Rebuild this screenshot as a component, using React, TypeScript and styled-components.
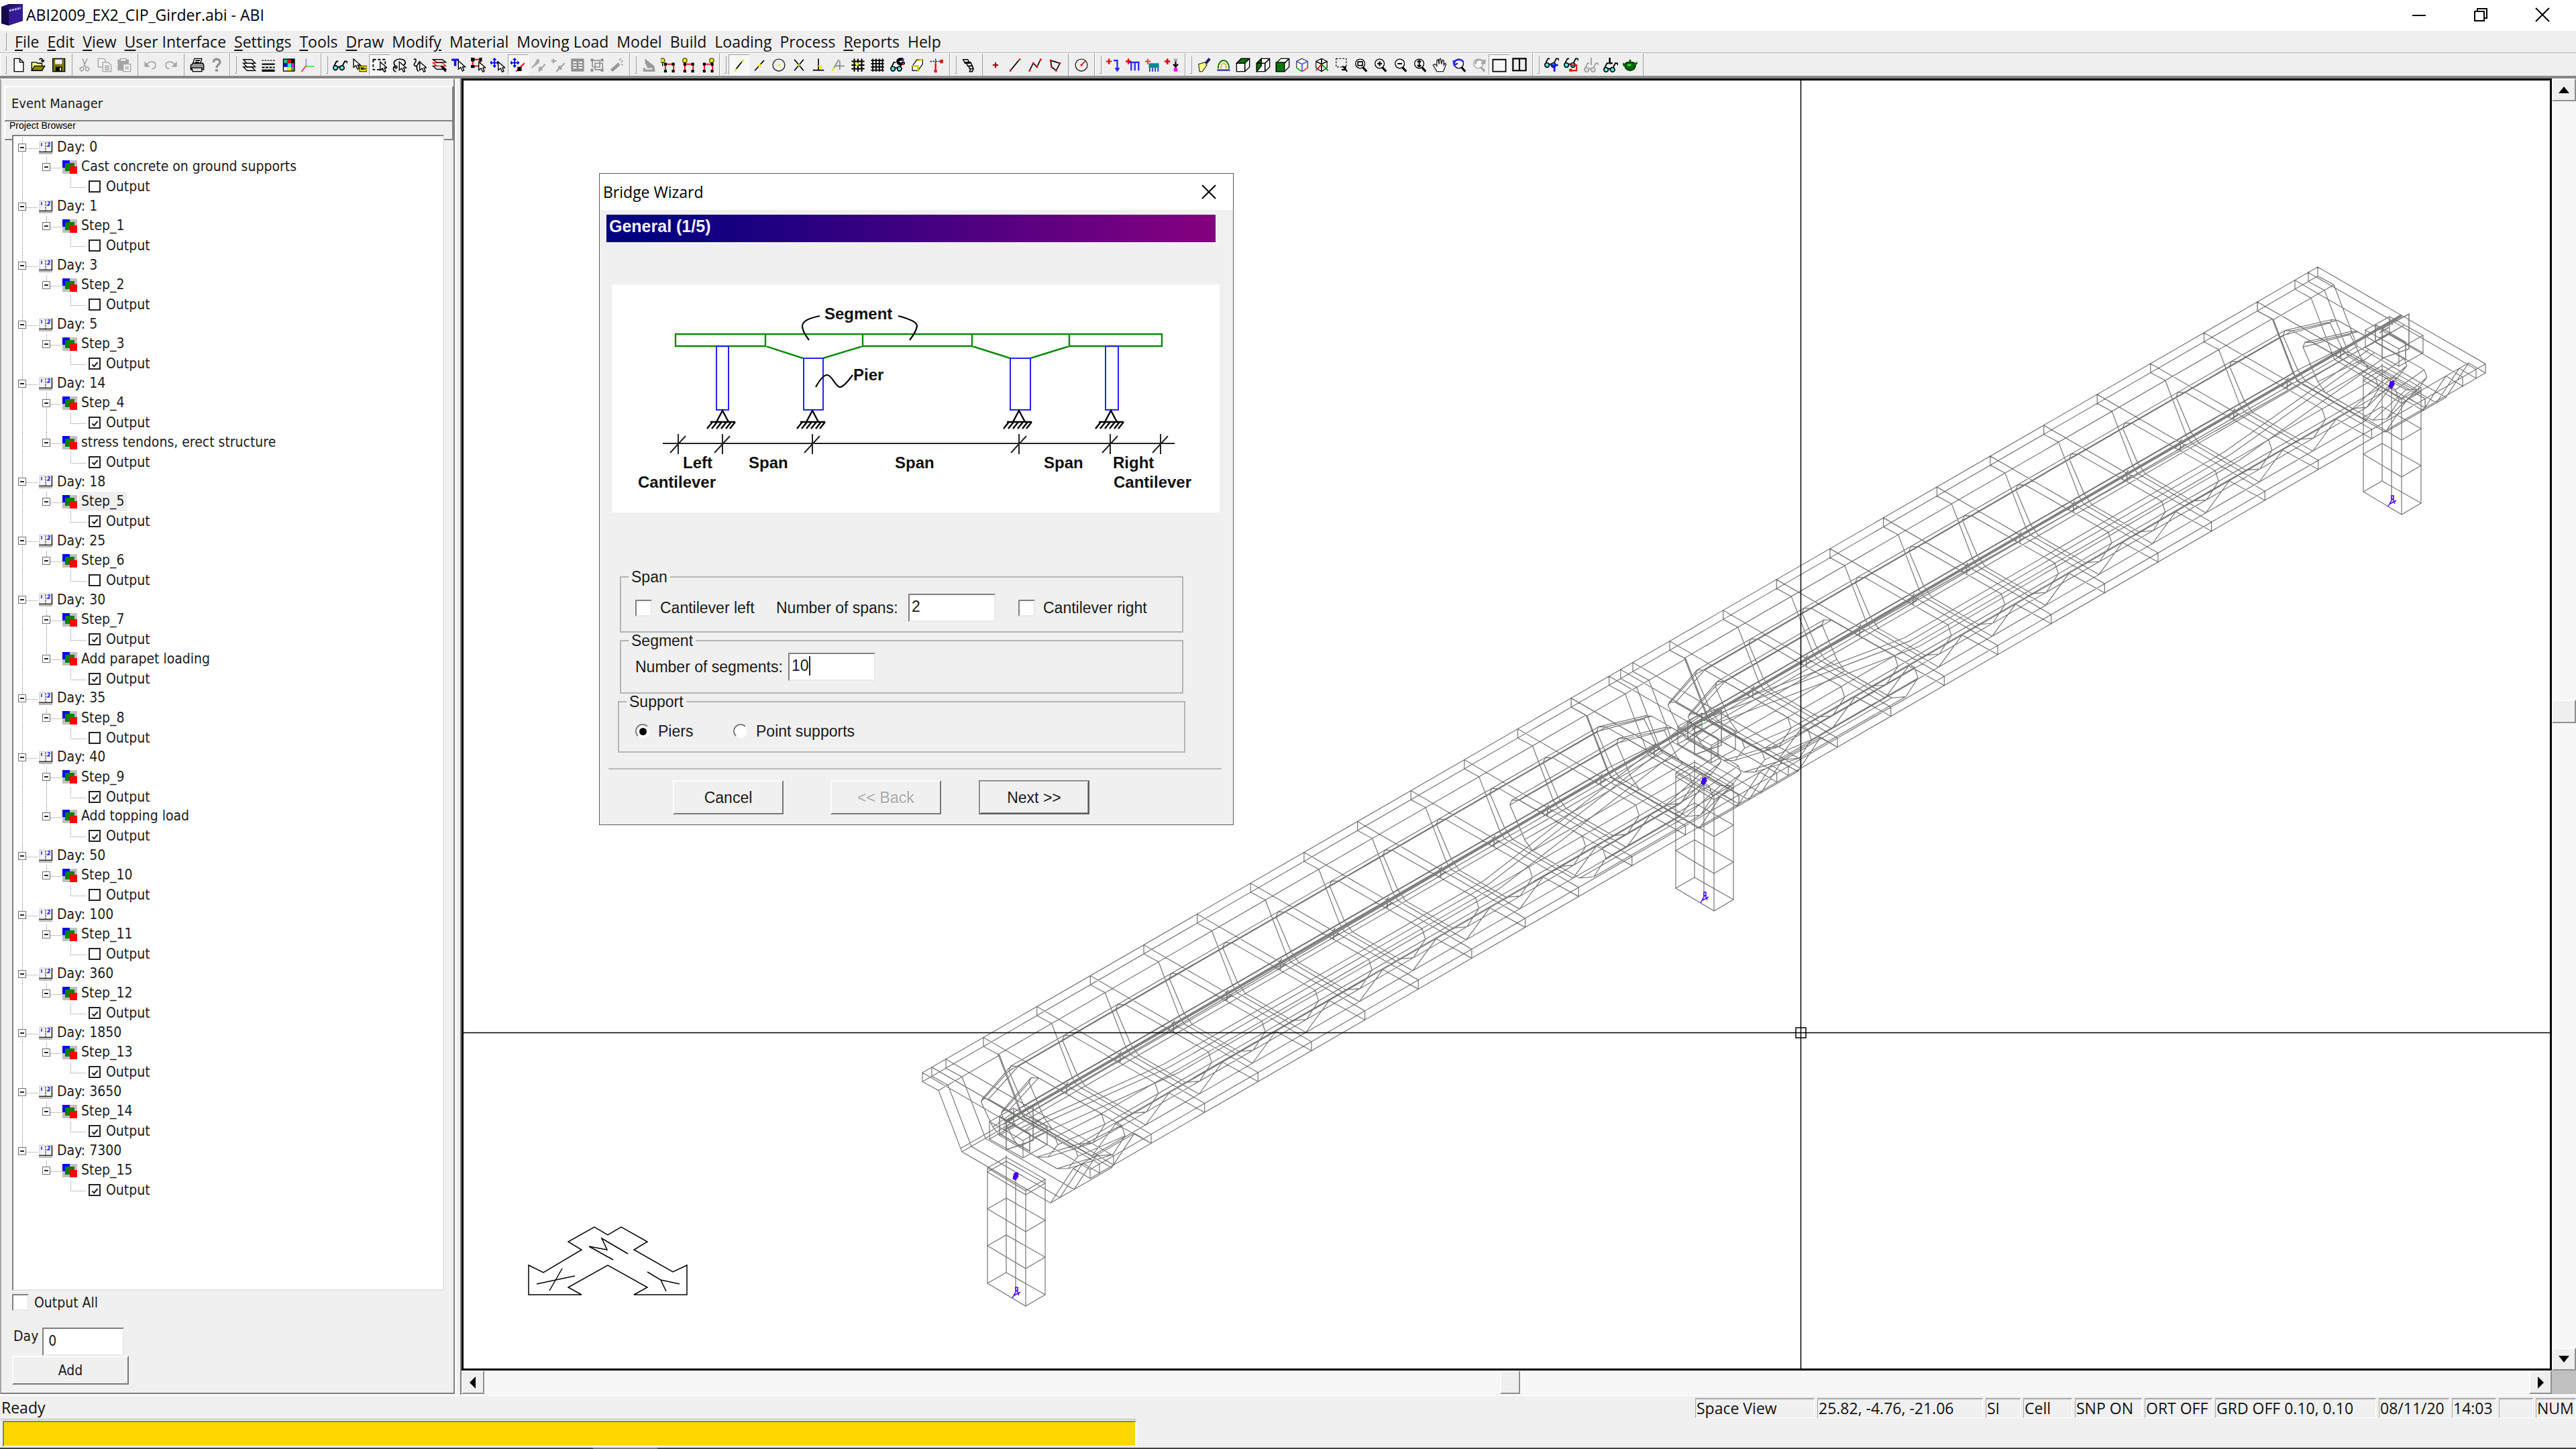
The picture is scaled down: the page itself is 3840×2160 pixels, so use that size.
import React from "react";
import styled, { createGlobalStyle, css } from "styled-components";

const UI = `"Open Sans", "Noto Sans", sans-serif`;
const TREE = `"DejaVu Sans Condensed", "DejaVu Sans", sans-serif`;
const FORM = `"Liberation Sans", Arial, sans-serif`;

const Global = createGlobalStyle`
  *, *::before, *::after { box-sizing: border-box; }
  body { margin: 0; background: #f0f0f0; color: #111; font: 23px/30px ${UI}; overflow: hidden; }
  button, input { font: inherit; color: inherit; margin: 0; padding: 0; border-radius: 0; }
  button { background: none; border: 0; }
  svg { display: block; }
`;

/* ---------- frame ---------- */

const Shell = styled.div`
  display: flex;
  flex-direction: column;
  height: 100vh;
`;

const TitleBar = styled.header`
  display: flex;
  align-items: center;
  height: 46px;
  padding: 0 4px 2px 1px;
  background: #fff;
`;

const Title = styled.h1`
  flex: 1;
  margin: 0 0 0 4px;
  font: 400 23px/30px ${UI};
  color: #000;
`;

const WindowButton = styled.button`
  display: grid;
  place-items: center;
  width: 92px;
  height: 44px;
`;

const MenuBar = styled.nav`
  display: flex;
  gap: 12px;
  height: 32px;
  padding-left: 7px;
  background: #efefef;
`;

const MenuGrip = styled.span`
  width: 3px;
  height: 26px;
  margin-top: 3px;
  border-right: 1px solid #a0a0a0;
  border-bottom: 1px solid #a0a0a0;
`;

const MenuItem = styled.button`
  line-height: 32px;
  u { text-underline-offset: 3px; text-decoration-thickness: 2px; }
`;

const ToolBar = styled.div`
  display: flex;
  height: 35px;
  background: #efefef;
  border-top: 1px solid #b4b4b4;
`;

const ToolGroup = styled.div<{ $w: number }>`
  display: flex;
  align-items: center;
  width: ${(p) => p.$w}px;
  padding: 0 4px 0 6px;
  border-top: 1px solid #fff;
  border-left: 1px solid #fff;
  border-right: 1px solid #a0a0a0;
`;

const Grip = styled.span`
  width: 3px;
  height: 26px;
  margin-right: 3px;
  border-right: 1px solid #a0a0a0;
  border-bottom: 1px solid #a0a0a0;
`;

const Divider = styled.span`
  width: 10px;
  height: 34px;
  background: linear-gradient(#a0a0a0, #a0a0a0) 5px 0 / 1px 100% no-repeat;
`;

const Tool = styled.button<{ $on?: boolean }>`
  display: grid;
  place-items: center;
  flex: 1;
  height: 31px;
  ${(p) =>
    p.$on &&
    css`
      background: #f8f8f8;
      border: 1px solid #fff;
      border-top-color: #a0a0a0;
      border-left-color: #a0a0a0;
    `}
`;

const Workspace = styled.main`
  display: flex;
  flex: 1;
  min-height: 0;
  border-top: 4px solid #868686;
`;

/* ---------- event manager ---------- */

const SidePane = styled.aside`
  display: flex;
  flex-direction: column;
  width: 678px;
  margin: 0 8px 1px 0;
  padding-top: 9px;
  border: 2px solid #808080;
  border-top-color: #fff;
  border-left-color: #a8a8a8;
  font: 21px/26px ${TREE};
  color: #1c1c1c;
  box-shadow: 3px 0 0 #fafafa;
`;

const PaneTitle = styled.h2`
  height: 53px;
  margin: 0 0 0 4px;
  padding: 11px 0 0 9px;
  border: 2px solid #808080;
  border-top-color: #fff;
  border-left-color: #fff;
  font: 400 20px/26px ${TREE};
`;

const BrowserTitle = styled.h3`
  height: 28px;
  margin: 0 0 0 4px;
  padding-left: 6px;
  border: 2px solid #808080;
  border-top: 0;
  border-left-color: #fff;
  overflow: hidden;
  font: 400 14px/12px ${FORM};
  color: #000;
`;

const TreeBox = styled.div`
  position: relative;
  flex: 1;
  min-height: 0;
  margin: -8px 14px 0 16px;
  border: 2px solid #808080;
  border-right-color: #e4e4e4;
  border-bottom-color: #e4e4e4;
  background: #fff;
`;

const TreeList = styled.ul`
  display: grid;
  grid-auto-rows: 1fr;
  height: 1586px;
  margin: 0;
  padding: 2px 0 0 1px;
  list-style: none;
`;

const TreeRow = styled.li`
  display: flex;
  align-items: stretch;
`;

const dotsV = "repeating-linear-gradient(to bottom, #8a8a8a 0 1px, transparent 1px 2px)";
const dotsH = "repeating-linear-gradient(to right, #8a8a8a 0 1px, transparent 1px 2px)";

const Guide = styled.span<{ $v: "none" | "full" | "top"; $h?: boolean }>`
  display: grid;
  align-items: center;
  width: 36px;
  padding-left: 6px;
  background:
    ${dotsV} 12px 0 / 1px ${(p) => (p.$v === "none" ? "0" : p.$v === "full" ? "100%" : "50%")} no-repeat,
    ${dotsH} 12px 55% / ${(p) => (p.$h ? "24px" : "0")} 1px no-repeat;
`;

const Expander = styled.button`
  width: 12px;
  height: 12px;
  border: 1px solid #707070;
  background: linear-gradient(#222, #222) center / 6px 2px no-repeat #fff;
`;

const NodeIcon = styled.span`
  display: grid;
  align-items: center;
  width: 22px;
  margin-right: 3px;
`;

const NodeText = styled.span<{ $sel?: boolean }>`
  padding: 0 3px;
  align-self: center;
  line-height: 29px;
  white-space: nowrap;
  background: ${(p) => (p.$sel ? "#efefef" : "none")};
`;

const OutputLabel = styled.label`
  display: flex;
  align-items: center;
  gap: 8px;
  padding-left: 3px;
`;

const NodeCheck = styled.input`
  appearance: none;
  display: grid;
  place-items: center;
  width: 18px;
  height: 18px;
  border: 2px solid #222;
  background: #fff;
  &:checked::before {
    content: "";
    width: 5px;
    height: 9px;
    border: solid #222;
    border-width: 0 2px 2px 0;
    transform: rotate(40deg);
  }
`;

const sunken = css`
  border: 2px solid #808080;
  border-right-color: #e9e9e9;
  border-bottom-color: #e9e9e9;
  background: #fff;
  outline: none;
`;

const Check = styled.input`
  appearance: none;
  flex: none;
  width: 25px;
  height: 25px;
  ${sunken}
`;

const PaneFoot = styled.div`
  padding: 5px 16px 12px;
`;

const OutputAll = styled.label`
  display: flex;
  align-items: center;
  gap: 8px;
  height: 25px;
`;

const DayRow = styled.div`
  display: flex;
  gap: 6px;
  margin-top: 25px;
  padding-left: 2px;
`;

const DayInput = styled.input`
  width: 122px;
  height: 42px;
  padding: 0 0 2px 7px;
  ${sunken}
`;

const Push = styled.button<{ $w: number; $h: number; $main?: boolean }>`
  width: ${(p) => p.$w}px;
  height: ${(p) => p.$h}px;
  background: #f0f0f0;
  border: 2px solid #787878;
  border-top-color: #fcfcfc;
  border-left-color: #fcfcfc;
  ${(p) => p.$main && css`border-color: #8c8c8c #5c5c5c #5c5c5c #8c8c8c; box-shadow: inset 1px 1px 0 #fff, inset -1px -1px 0 #909090;`}
  &:disabled { color: #a8a8a8; text-shadow: 1px 1px 0 #fff; }
`;

/* ---------- drawing area ---------- */

const ViewPane = styled.section`
  display: grid;
  flex: 1;
  grid-template: 1fr 36px / 1fr 36px;
  min-width: 0;
  border-left: 2px solid #808080;
`;

const Canvas = styled.div`
  position: relative;
  border: 3px solid #000;
  background: #fff;
  overflow: hidden;
`;

const Drawing = styled.svg`
  width: 100%;
  height: 100%;
`;

const VBar = styled.div`
  display: grid;
  grid-template-rows: 34px 891fr 35px 930fr 34px;
  background: #f7f7f7;
`;

const HBar = styled.div`
  display: grid;
  grid-template-columns: 34px 1514fr 30px 1504fr 34px;
  background: #f7f7f7;
  height: 35px;
`;

const ScrollButton = styled.button`
  display: grid;
  place-items: center;
  background: #efefef;
  border: 2px solid #909090;
  border-top-color: #fdfdfd;
  border-left-color: #fdfdfd;
`;

const Corner = styled.span`
  background: #c0c0c0;
  height: 35px;
`;

/* ---------- wizard ---------- */

const Dialog = styled.section`
  position: absolute;
  left: 202px;
  top: 138px;
  width: 946px;
  padding-bottom: 15px;
  border: 1px solid #5c5c5c;
  background: #f0f0f0;
  font: 23px/26px ${FORM};
  color: #1a1a1a;
`;

const DialogTitle = styled.div`
  display: flex;
  align-items: center;
  justify-content: space-between;
  height: 54px;
  padding: 0 25px 0 5px;
  background: #fff;
  font: 23px/30px ${UI};
  color: #000;
`;

const PageTitle = styled.h2`
  height: 41px;
  margin: 7px 26px 0 10px;
  padding-left: 4px;
  background: linear-gradient(90deg, #000080 5%, #800080 96%);
  font: 700 25px/34px ${FORM};
  color: #f4f0ff;
`;

const Figure = styled.div`
  margin: 63px 20px 84px 18px;
  background: #fff;
`;

const Group = styled.fieldset<{ $h: number; $wide?: boolean }>`
  height: ${(p) => p.$h}px;
  margin: 0 ${(p) => (p.$wide ? 71 : 74)}px 0 ${(p) => (p.$wide ? 27 : 30)}px;
  padding: 0;
  border: 2px solid #b4b4b4;
  legend {
    margin-left: 11px;
    padding: 0 4px;
    line-height: 24px;
  }
`;

const SpanRow = styled.div`
  display: grid;
  grid-template-columns: 210px 197px 164px auto;
  align-items: center;
  height: 42px;
  margin-top: 13px;
  padding-left: 21px;
`;

const SegmentRow = styled.div`
  display: grid;
  grid-template-columns: 228px auto;
  align-items: center;
  height: 42px;
  margin-top: 6px;
  padding-left: 21px;
`;

const SupportRow = styled.div`
  display: grid;
  grid-template-columns: 146px auto;
  align-items: center;
  height: 42px;
  margin-top: 11px;
  padding-left: 24px;
`;

const Choice = styled.label`
  display: flex;
  align-items: center;
  gap: 12px;
`;

const Radio = styled.input`
  appearance: none;
  display: grid;
  place-items: center;
  width: 22px;
  height: 22px;
  border: 2px solid #808080;
  border-right-color: #f6f6f6;
  border-bottom-color: #f6f6f6;
  border-radius: 50%;
  background: #fff;
  &:checked::before {
    content: "";
    width: 11px;
    height: 11px;
    border-radius: 50%;
    background: #000;
  }
`;

const NumberBox = styled.span`
  position: relative;
  width: 130px;
  height: 42px;
`;

const NumberInput = styled.input`
  width: 130px;
  height: 42px;
  padding: 0 0 4px 3px;
  ${sunken}
`;

const Caret = styled.span`
  position: absolute;
  left: 31px;
  top: 5px;
  width: 2px;
  height: 29px;
  background: #222;
`;

const Rule = styled.hr`
  height: 2px;
  margin: 23px 17px 16px 13px;
  border: 0;
  background: #b8b8b8;
`;

const Buttons = styled.div`
  display: grid;
  grid-template-columns: 235px 221px 165px;
  padding-left: 109px;
`;

/* ---------- status ---------- */

const StatusBar = styled.footer`
  display: flex;
  gap: 4px;
  height: 36px;
  padding-top: 3px;
  border-top: 2px solid #fff;
  font: 23px/28px ${UI};
`;

const Ready = styled.span`
  flex: 1;
  padding-left: 2px;
`;

const Cell = styled.span<{ $w: number }>`
  width: ${(p) => p.$w}px;
  height: 30px;
  padding-left: 1px;
  border: 1px solid #fff;
  border-top: 2px solid #a8a8a8;
  border-left-color: #a8a8a8;
  line-height: 26px;
  white-space: nowrap;
`;

const ProgressRow = styled.div`
  height: 43px;
  padding-top: 3px;
  background: linear-gradient(#b4b4b4, #b4b4b4) 0 0 / 1694px 1px no-repeat;
`;

const Progress = styled.div`
  width: 44%;
  height: 39px;
  margin-left: 4px;
  border: 2px solid #808080;
  border-right-color: #fff;
  border-bottom-color: #fff;
  background: #ffd700;
`;

const TaskEdge = styled.div`
  height: 2px;
  background: linear-gradient(#777, #777) 884px 0 / 96px 2px no-repeat #404040;
`;

/* ---------- icons ---------- */

const S = ({ d, c = "#000", w = 1.2 }: { d: string; c?: string; w?: number }) => (
  <path d={d} stroke={c} strokeWidth={w} fill="none" />
);
const F = ({ d, c = "#000", s }: { d: string; c?: string; s?: string }) => (
  <path d={d} fill={c} stroke={s} strokeWidth={s ? 1 : 0} />
);
const Arrow = ({ c = "#000", x = 7, y = 4 }: { c?: string; x?: number; y?: number }) => (
  <path
    transform={`translate(${x} ${y})`}
    d="M.5 .5V9.5L3 7.5L5 11.5L6.5 10.5L5 7H8Z"
    fill="#fff"
    stroke={c}
  />
);
const Glasses = ({ c = "#000", f = "#5ff", y = 0 }: { c?: string; f?: string; y?: number }) => (
  <g transform={`translate(0 ${y})`}>
    <path d="M1 10L4 4H6M10 10L13 4H15L16 6M5.500 10H8" stroke={c} strokeWidth="1.300" fill="none" />
    <circle cx="3" cy="11" r="2.400" fill={f} stroke={c} strokeWidth="1.200" />
    <circle cx="10" cy="11" r="2.400" fill={f} stroke={c} strokeWidth="1.200" />
  </g>
);
const Move = ({ x = 0, y = 0 }: { x?: number; y?: number }) => (
  <path
    transform={`translate(${x} ${y})`}
    d="M4.500 0V9M0 4.500H9M3 1.500L4.500 0L6 1.500M3 7.500L4.500 9L6 7.500M1.500 3L0 4.500L1.500 6M7.500 3L9 4.500L7.500 6"
    stroke="#00f"
    strokeWidth="1.300"
    fill="none"
  />
);
const Lens = ({ c = "#000" }: { c?: string }) => (
  <>
    <circle cx="7" cy="6.500" r="5" fill="#fff" stroke={c} />
    <path d="M10 10.500L14 15" stroke={c} strokeWidth="2.200" />
  </>
);
const Frame = ({ c = "#e00" }: { c?: string }) => (
  <>
    <path d="M5 7V14M5 7H14V14" stroke={c} fill="none" strokeWidth="1.300" />
    <path d="M3.500 5.500h3v3h-3zM12 5.500h3v3h-3zM3.500 13h3v3h-3zM12 13h3v3h-3z" />
  </>
);
const Bulb = ({ x = 2 }: { x?: number }) => (
  <>
    <circle cx={x} cy="3" r="2.300" fill="#ff0" stroke="#550" />
    <path d={`M${x} 5V9`} stroke="#000" />
  </>
);
const RedDot = ({ x, y }: { x: number; y: number }) => <rect x={x - 1} y={y - 1} width="2" height="2" fill="#f00" />;
const G = "#a4a4a4";

const icons: Record<string, React.ReactNode> = {
  new: <F d="M3 1H9L13 5V15H3Z M9 1V5H13" c="#fff" s="#000" />,
  open: <><F d="M1 5H6L7 6H12V14H1Z" c="#ff8" s="#000" /><F d="M4 9H15L12 14H1Z" c="#880" s="#000" /><S d="M9 2C11 0 13 1 13 4M11 3L13 4.500L14.500 2.500" /></>,
  save: <><F d="M2 1H15V15H2Z" c="#770" s="#000" /><F d="M4.500 2H12V7H4.500Z" c="#eee" /><F d="M5 10H12V15H5Z" /><F d="M9.500 11H11V14H9.500Z" c="#eee" /></>,
  cut: <S c={G} d="M6 1L9 10M11 1L7 10M6 10.500A2 2 0 1 0 6 14A2 2 0 0 0 6 10.500M10 10.500A2 2 0 1 1 10 14A2 2 0 0 1 10 10.500" />,
  copy: <><F d="M1 1H7L9 3V10H1Z" c="#f4f4f4" s={G} /><F d="M6 5H12L15 8V15H6Z" c="#f4f4f4" s={G} /><S c={G} d="M8 9H13M8 11H13M8 13H13" /></>,
  paste: <><F d="M1 2H13V14H1Z" c={G} /><F d="M4 1H10V4H4Z" c="#eee" s={G} /><F d="M7 7H15V15H7Z" c="#f4f4f4" s={G} /><S c={G} d="M9 10H13M9 12H13" /></>,
  undo: <><S c={G} d="M4 7C6 3 13 4 13 8C13 11 11 12 9 12" /><F c={G} d="M1 4V10H7Z" /></>,
  redo: <><S c={G} d="M12 7C10 3 3 4 3 8C3 11 5 12 7 12" /><F c={G} d="M15 4V10H9Z" /></>,
  print: <><F d="M5 1H13L11 7H3Z" c="#fff" s="#000" /><F d="M1 8L4 6H14L15 8V13H1Z" c="#999" s="#000" /><F d="M2 11H13V15H3Z" c="#ddd" s="#000" /><S d="M6 3H11M5.500 5H10" /></>,
  help: <><S c="#909090" w={2.4} d="M4.500 5C4.500 0 12 1 11.500 5C11.500 7.500 8 7.500 8 11" /><F c="#909090" d="M6.500 12.500H9.500V15H6.500Z" /></>,
  layers: <><F d="M2 10L11 10L15 14H6Z" c="#fff" s="#000" /><F d="M2 6L11 6L15 10H6Z" c="#fff" s="#000" /><F d="M2 2L11 2L15 6H6Z" c="#fff" s="#000" /></>,
  linetype: <><path d="M1 3H15" stroke="#000" strokeDasharray="2 1" /><S w={1.6} d="M1 7H15" /><path d="M1 10.500H15" stroke="#000" strokeWidth="1.500" strokeDasharray="3 1" /><S w={2.4} d="M1 14H15" /></>,
  colors: <><F d="M2 1H15V15H2Z" /><F c="#0c8" d="M3 2H7V6H3Z" /><F c="#e00" d="M7 2H11V6H7Z" /><F c="#00e" d="M3 6H7V10H3Z" /><F c="#0ff" d="M7 6H11V10H7Z" /><F c="#ff0" d="M7 10H11V14H7Z" /><F c="#f0f" d="M11 6H14V10H11Z" /><F c="#fff" d="M3 10H7V14H3Z" /><F c="#888" d="M11 10H14V14H11Z" /></>,
  axes: <><S c="#88f" d="M6 1V9" /><S c="#5e5" w={1.6} d="M6 9.500H15" /><S c="#f33" d="M6 9L1 15" /></>,
  glasses: <Glasses />,
  pickLabel: <><Arrow x={1} y={1} /><F d="M8 9H16V15H8Z" c="#fe0" s="#440" /><S d="M10 13V11L11 12L12 11V13M14 11V13" /></>,
  pickWindow: <><path d="M1 2H14V13H1Z" fill="none" stroke="#000" strokeWidth="1.300" strokeDasharray="3 2" /><Arrow x={8} /></>,
  pickLasso: <><S d="M3 9C-1 4 5 1 9 1.500C15 2 15 7 12 8M3 9C2 12 5 12 5 10C5 8 1 9 1 12C1 14 3 15 4 15" /><Arrow x={7} y={4} /></>,
  pickFence: <><S d="M2 2C5 0 5 4 3 6C1 9 5 10 6 8C8 6 7 4 9 4M6 9C4 12 6 13 7 15" /><Arrow x={8} /></>,
  pickLayer: <><F d="M1 9H11L15 12.500H5Z" c="#fff" s="#000" /><F d="M1 5.500H11L15 9H5Z" c="#fff" s="#e00" /><F d="M1 2H11L15 5H5Z" c="#fff" s="#000" /><S w={2} d="M10 9L15 15" /></>,
  pickText: <><F d="M0 1H8V3.500H5.300V9H2.700V3.500H0Z" c="#11f" /><Arrow x={7} y={3} /></>,
  pickNode: <><S c="#e00" d="M2 2H10V9H2Z" w={1.4} /><F d="M0 0H4V4H0ZM9 0H12V4H9ZM0 8H4V11H0Z" /><Arrow x={8} /></>,
  pickMove: <><Move y={1} /><Arrow x={8} y={4} /></>,
  snapMove: <><S c="#e00" w={1.4} d="M6 15L15 6" /><F d="M7.500 10H12V14.500H7.500Z" /><Move y={1} /></>,
  wave: <><S c={G} w={1.6} d="M1 11C2 8 4 9 5 6C6 2 8 1 8 4C8 7 3 7 4 9M8 15L15 7" /><F c={G} d="M8 10H12V14H8Z" /></>,
  plusNode: <><S c={G} w={1.6} d="M3 1V6M.5 3.500H6M6 15L15 6" /><F c={G} d="M8 9H12V13H8Z" /></>,
  table: <><F c="#909090" d="M1 1H15V15H1Z" /><S c="#f4f4f4" d="M3 5H7M9 5H13M3 8H7M9 8H13M3 11H7M9 11H13" w={1.6} /></>,
  group: <><S c="#909090" d="M3 3H11V10H3ZM6 6H14V13H6Z" /><F c="#909090" d="M1 1H4V4H1ZM12 1H15V4H12ZM1 12H4V15H1ZM12 12H15V15H12Z" /></>,
  wand: <><F c="#999" d="M1 13L10 5L12 8L4 15Z" /><S c={G} d="M11 3L13 1M13 5L15 3M13 7L15 8" /></>,
  buildOff: <><F c="#999" d="M4 1L14 9L15 15H2V11H7L4 6Z" /><S c="#eee" d="M4 12L12 12" w={1.6} /></>,
  frameA: <><Frame /><Bulb /></>,
  frameB: <><Frame /><Bulb x={5} /></>,
  frameC: <><Frame /><Bulb x={13} /></>,
  lineEnd: <><S d="M4 13L12 3" /><S c="#ee0" w={1.8} d="M3 15L5 12M11 5L13 2" /></>,
  lineMid: <><S d="M3 14L13 3" /><F c="#ee0" d="M7 7H10V10H7Z" /></>,
  circle: <><circle cx="8" cy="8" r="6.500" fill="none" stroke="#222" /><F c="#ee0" d="M7 7H9V9H7Z" /></>,
  cross: <><S d="M3 2L13 14M13 2L3 14" /><F c="#ee0" d="M7 7H9V9H7Z" /></>,
  perp: <><S d="M8 1V13M2 13.500H14" /><S c="#ee0" w={1.8} d="M8 9H11V13" /></>,
  tangent: <><S c="#888" d="M2 14L9 2M10 3V13M5 9H15" /><S c="#ee0" w={1.8} d="M2 14L4 11" /></>,
  gridSnap: <><S d="M4 1V15M8 1V15M12 1V15M1 4H15M1 8H15M1 12H15" w={1.5} /><F c="#ff0" d="M5.500 5.500H8.500V8.500H5.500Z" /></>,
  grid: <S d="M3 1V15M6.500 1V15M10 1V15M13.500 1V15M1 3H15M1 6.500H15M1 10H15M1 13.500H15" w={1.3} />,
  magnet: <><S w={3.2} d="M14 2C7 0 6 7 13 7" /><F c="#33f" d="M13 1H15V4H13Z" /><F c="#e00" d="M13 6H15V8H13Z" /><Glasses y={1} /></>,
  loft: <><F d="M3 9L8 2L14 2L14 7L9 14H3Z" c="#fff" s="#222" /><S c="#cc0" w={1.8} d="M2 9H9V15M8 3L14 2" /></>,
  ortho: <><path d="M1 4H15M7 1V15" stroke="#222" strokeDasharray="2 1" /><S c="#e00" w={1.6} d="M7 6V15" /><F c="#e00" d="M12 2H15V6H12ZM5.500 13H8.500V16H5.500Z" /></>,
  chain: <S w={1.1} d="M2 2H7L9 6H4ZM5 5H10L12 9H7ZM8 9H12L13 12H9ZM10 12H13L12 15H9Z" />,
  point: <S w={1.6} c="#a00" d="M8 5V11M5 8H11" />,
  line: <><S d="M3 14L12 3" /><RedDot x={3} y={14} /><RedDot x={13} y={2} /></>,
  polyline: <><S d="M2 14L6 6L10 10L14 2" /><RedDot x={2} y={14} /><RedDot x={6} y={6} /><RedDot x={10} y={10} /><RedDot x={14} y={2} /></>,
  polygon: <><S d="M3 3L13 6L9 14L4 10Z" /><RedDot x={3} y={3} /><RedDot x={13} y={6} /><RedDot x={9} y={14} /><RedDot x={4} y={10} /></>,
  circleTool: <><circle cx="8" cy="8" r="6.500" fill="none" stroke="#222" /><S c="#c00" d="M8 8L12 4" /><RedDot x={8} y={8} /></>,
  loadPoint: <><S c="#e00" w={1.6} d="M3 1V7M0 4H6" /><S c="#22f" w={1.6} d="M8 3H12V14M10 11L12 14L14 11" /></>,
  loadLine: <><S c="#e00" w={1.8} d="M3 1V7M0 4H6" /><S c="#22f" w={1.6} d="M4 5H15M6 5V14M10 5V14M14 5V14" /></>,
  loadArea: <><S c="#e33" w={1.3} d="M3 1V7M0 4H6" /><F c="#088" d="M4 6H15V11H4Z" /><S c="#22f" w={1.3} d="M5 11V15M8 11V15M11 11V15M14 11V15" /></>,
  loadNode: <><S c="#e00" w={2} d="M3 1V7M0 4H6" /><F c="#aaa" d="M10 1H14V4H10Z" /><S w={1.6} d="M12 4V10M9.500 7L12 10L14.500 7" /><F c="#f0f" d="M10 11H14V15H10Z" /></>,
  brush: <><F d="M2 7L9 5L11 8L6 15H3Z" c="#ff8" s="#444" /><S c="#226" w={3} d="M10 6L14 1" /></>,
  dome: <><S c="#060" d="M2 12C2 0 14 0 14 12" /><S c="#cc0" d="M5 12C5 4 11 4 11 12" /><S c="#22a" w={1.6} d="M1 13.500H15" /></>,
  boxTop: <><F d="M1 6L6 1H15V10L10 15H1Z" c="#fff" s="#000" /><F d="M1 6L6 1H15L10 6Z" c="#070" s="#000" /><S d="M10 6V15" /></>,
  boxSide: <><F d="M1 6L6 1H15V10L10 15H1Z" c="#fff" s="#000" /><F d="M1 6L6 1V9L1 15Z" c="#070" s="#000" /><S d="M1 6H10V15M10 6L15 1" /></>,
  boxFront: <><F d="M1 6L6 1H15V10L10 15H1Z" c="#fff" s="#000" /><F d="M1 5H10V15H1Z" c="#070" s="#000" /><S d="M10 6L15 1" /></>,
  cube: <><F d="M8 1L14 4V11L8 15L2 11V4Z" c="#fff" s="#444" /><S c="#44f" d="M2 4L8 7L14 4M8 7V15" /><S c="#0c0" d="M2 11L8 15" /><S c="#f44" d="M8 15L14 11" /></>,
  cubeAxes: <><F d="M8 1L14 4V11L8 15L2 11V4Z" c="#fff" s="#222" /><S d="M2 4L8 7L14 4M8 1V15" /><S c="#0a0" d="M8 7L15 14" w={1.5} /><S c="#e00" d="M8 7L2 14" /></>,
  windowPick: <><path d="M2 1H13V10H2Z" fill="none" stroke="#222" strokeDasharray="2 1.500" /><path d="M9 9L14 15M12 9V13H8" stroke="#000" fill="none" strokeWidth="1.600" /></>,
  zoomWin: <><Lens /><S d="M4.500 4.500H9.500V8.500H4.500Z" /></>,
  zoomIn: <><Lens /><S w={1.6} d="M7 4V9M4.500 6.500H9.500" /></>,
  zoomOut: <><Lens /><S w={1.6} d="M4.500 6.500H9.500" /></>,
  zoomAll: <><Lens /><S w={1.4} d="M7 3V10M5 5L7 3L9 5M5 8L7 10L9 8" /></>,
  hand: <F d="M5 15L1 8L3 7L5 9V3L6.500 2L7.500 7V2L9 1L10 7L11 2.500L12.500 3V8L14 6L15 7L12 15Z" c="#fff" s="#222" />,
  zoomPrev: <><Lens /><S c="#22f" w={1.8} d="M2 7C2 1 10 1 12 5M1 3L2 8L6 6" /></>,
  zoomNext: <><Lens c={G} /><S c={G} w={1.8} d="M4 7C4 1 11 1 13 5M14 2V6H10" /></>,
  paneOne: <S d="M1 2H15V15H1Z" w={1.3} />,
  paneTwo: <S d="M1 1H15V14H1ZM8 1V14" w={1.6} />,
  viewT: <><Glasses y={-3} /><S c="#11f" w={2} d="M7 8H15M11 8V15" /></>,
  viewFrame: <><Glasses y={-3} /><S c="#e00" w={1.4} d="M7 8H14V14H8" /><F d="M6 12H9V15H6Z" c="#e00" /></>,
  viewOff: <><Glasses c={G} f="#ddd" y={2} /><S c={G} w={1.6} d="M8 0V8" /></>,
  viewL: <><Glasses y={2} /><S w={1.8} d="M7 0V6H10" /></>,
  render: <><F d="M2 7C4 4 12 4 14 7C14 12 11 14 8 14C5 14 2 12 2 7Z" c="#060" s="#020" /><S c="#060" w={2} d="M13 8L16 5M2 9L0 6" /><F c="#4d4" d="M5 7H9V9H5Z" /><F c="#060" d="M7 2H9V5H7Z" /></>,
};

const Icon = ({ name }: { name: string }) => (
  <svg width="22" height="22" viewBox="0 0 16 16" aria-hidden="true">
    {icons[name]}
  </svg>
);

const toolGroups: { w: number; items: string }[] = [
  { w: 343, items: "new open save | cut copy paste | undo redo | print help" },
  { w: 136, items: "layers linetype colors axes" },
  { w: 460, items: "glasses pickLabel *pickWindow pickLasso pickFence pickLayer pickText pickNode pickMove *snapMove wave plusNode table group wand" },
  { w: 134, items: "buildOff frameA frameB frameC" },
  { w: 343, items: "*lineEnd lineMid circle cross perp tangent gridSnap grid magnet loft ortho" },
  { w: 216, items: "chain | point line polyline polygon | circleTool" },
  { w: 135, items: "loadPoint loadLine loadArea loadNode" },
  { w: 518, items: "brush dome boxTop boxSide boxFront cube cubeAxes windowPick zoomWin zoomIn zoomOut zoomAll hand zoomPrev zoomNext *paneOne paneTwo" },
  { w: 165, items: "viewT viewFrame viewOff viewL render" },
];

/* ---------- event tree ---------- */

const days: [string, [string, boolean][]][] = [
  ["0", [["Cast concrete on ground supports", false]]],
  ["1", [["Step_1", false]]],
  ["3", [["Step_2", false]]],
  ["5", [["Step_3", true]]],
  ["14", [["Step_4", true], ["stress tendons, erect structure", true]]],
  ["18", [["Step_5", true]]],
  ["25", [["Step_6", false]]],
  ["30", [["Step_7", true], ["Add parapet loading", true]]],
  ["35", [["Step_8", false]]],
  ["40", [["Step_9", true], ["Add topping load", true]]],
  ["50", [["Step_10", false]]],
  ["100", [["Step_11", false]]],
  ["360", [["Step_12", true]]],
  ["1850", [["Step_13", true]]],
  ["3650", [["Step_14", true]]],
  ["7300", [["Step_15", true]]],
];

const BookIcon = () => (
  <svg width="22" height="20" viewBox="0 0 22 20" aria-hidden="true">
    <path d="M1 19H21" stroke="#bbb" strokeWidth="2" />
    <path d="M2 1H9L11 3L13 1H20V16H2Z" fill="#f4f4f4" stroke="#c4c4c4" />
    <path d="M1 16.500H20.500V1" fill="none" stroke="#222" strokeWidth="1.500" />
    <path d="M11 2V16" stroke="#222" strokeDasharray="3 1" />
    <path d="M5 3V8M14 3H17V5L14 8H17.500" stroke="#22e" strokeWidth="1.500" fill="none" />
  </svg>
);

const StepIcon = () => (
  <svg width="22" height="20" viewBox="0 0 22 20" aria-hidden="true">
    <path d="M0 0H22V20H0Z" fill="#c0c0c0" />
    <path d="M0 0H11V11H0Z" fill="#00f" />
    <path d="M4 4H18V16H4Z" fill="#008000" />
    <path d="M11 9H22V20H11Z" fill="#f00" />
  </svg>
);

const EventTree = () => (
  <TreeList>
    {days.map(([day, steps], d) => {
      const last = d === days.length - 1;
      const trunk = last ? "none" : "full";
      return (
        <React.Fragment key={day}>
          <TreeRow>
            <Guide $v={last ? "top" : "full"} $h>
              <Expander aria-label={`Collapse day ${day}`} />
            </Guide>
            <NodeIcon><BookIcon /></NodeIcon>
            <NodeText>Day: {day}</NodeText>
          </TreeRow>
          {steps.map(([name, on], s) => {
            const lastStep = s === steps.length - 1;
            return (
              <React.Fragment key={name}>
                <TreeRow>
                  <Guide $v={trunk} />
                  <Guide $v={lastStep ? "top" : "full"} $h>
                    <Expander aria-label={`Collapse ${name}`} />
                  </Guide>
                  <NodeIcon><StepIcon /></NodeIcon>
                  <NodeText $sel={name === "Step_5"}>{name}</NodeText>
                </TreeRow>
                <TreeRow>
                  <Guide $v={trunk} />
                  <Guide $v={lastStep ? "none" : "full"} />
                  <Guide $v="top" $h />
                  <OutputLabel>
                    <NodeCheck type="checkbox" defaultChecked={on} />
                    Output
                  </OutputLabel>
                </TreeRow>
              </React.Fragment>
            );
          })}
        </React.Fragment>
      );
    })}
  </TreeList>
);

/* ---------- bridge model ---------- */

type BZ = [number, number];
const K = 0.57735;
const pt = (a: number, b: number, z: number) =>
  `${(1375 + a + b).toFixed(1)} ${(1599 - K * a + K * b + z).toFixed(1)}`;
const ring = (a: number, s: BZ[]) => `M${s.map(([b, z]) => pt(a, b, z)).join("L")}Z`;
const run = (a0: number, s0: BZ[], a1: number, s1: BZ[]) =>
  s0.map(([b, z], i) => `M${pt(a0, b, z)}L${pt(a1, s1[i][0], s1[i][1])}`).join("");

const outerMid: BZ[] = [[0, 0], [0, 13.5], [22, 12.5], [53, 76], [60, 83], [162, 83], [197, 15], [250, 13.5], [250, 0]];
const outerEnd: BZ[] = [[0, 0], [0, 13.5], [24, 12.5], [57, 80], [59, 84], [191, 84], [225, 13], [250, 13.5], [250, 0]];
const voidMid: BZ[] = [[52, 13], [41, 19], [38, 28], [60, 67], [72, 77], [142, 77], [163, 63], [181, 25], [176, 12]];
const voidWide: BZ[] = voidMid.map(([b, z]) => [b + 30, z]);
const taper = (s: BZ[], c: number): BZ[] => s.map(([b, z]) => [c + (b - c) * 0.8, 46 + (z - 46) * 0.7]);

const firstSpan = Array.from({ length: 12 }, (_, i) => 91 + i * 79.65);
const secondSpan = Array.from({ length: 12 }, (_, i) => 1114 + i * 79.65);
const diaphragms = [0, 14, 35, 1023.6, 1040.8, 1059, 2046, 2066, 2080];

const girder = () => {
  const d: string[] = [];
  [...firstSpan, ...secondSpan].forEach((a) => {
    d.push(ring(a, outerMid), ring(a, voidMid));
  });
  diaphragms.forEach((a) => d.push(ring(a, outerEnd)));
  [91, 967, 1114, 1990].forEach((a) => d.push(ring(a, outerEnd)));
  [91, 807.8, 967, 1114, 1273, 1990].forEach((a) => d.push(ring(a, voidWide)));
  [[91, 967], [1114, 1990]].forEach(([a, b]) => {
    d.push(run(a, outerMid, b, outerMid), run(a, voidMid, b, voidMid));
  });
  [[0, 91], [967, 1114], [1990, 2080]].forEach(([a, b]) => d.push(run(a, outerEnd, b, outerEnd)));
  [[807.8, 967], [1114, 1273]].forEach(([a, b]) => d.push(run(a, voidWide, b, voidWide)));
  [[35, 91], [1023.6, 967], [1059, 1114], [2046, 1990]].forEach(([a, b]) => {
    [[voidMid, 110], [voidWide, 140]].forEach(([v, c]) => {
      const t = taper(v as BZ[], c as number);
      d.push(ring(a, t), run(a, t, b, v as BZ[]));
    });
  });
  return d.join("");
};

const tendons = () =>
  [110, 118, 132].map((b) => `M${pt(35, b, 40)}L${pt(250, b, 68)}L${pt(727, b, 70)}L${pt(1041, b, 8)}L${pt(1354, b, 70)}L${pt(1832, b, 68)}L${pt(2046, b, 40)}`).join("");

const marks = () =>
  [...firstSpan, ...secondSpan]
    .map((a) => `M${pt(a, 124, 2)}v10M${pt(a, 118, 16)}l14 -10M${pt(a, 116, 14)}l10 -14`)
    .join("");

const Pier = ({ dx, dy }: { dx: number; dy: number }) => {
  const level = (y: number) => `M1472 ${y}L1500 ${y - 16}L1558 ${y + 17}L1529 ${y + 34}Z`;
  return (
    <g transform={`translate(${dx} ${dy})`}>
      <path d={[1741, 1747, 1802, 1857, 1913].map(level).join("")} />
      <path d="M1472 1741V1913M1500 1722V1897M1558 1757V1930M1529 1773V1947M1514 1757V1925" />
      <path d="M1475 1672L1511 1652L1561 1680L1525 1700ZM1475 1698L1511 1678L1561 1706L1525 1726ZM1475 1672V1698M1511 1652V1678M1561 1680V1706M1525 1700V1726" />
      <path d="M1490 1664L1535 1690V1716L1490 1690ZM1500 1670L1540 1648V1700L1500 1714ZM1496 1676l14 -8M1496 1684l18 -9" strokeWidth="1.500" />
      <path d="M1510 1757L1512 1749L1517 1748L1518 1753L1514 1759Z" fill="#4400ff" stroke="#4400ff" />
      <path d="M1514 1919h3v5h-3zM1515 1924L1509 1935M1516 1924L1519 1931M1512 1931L1521 1926" fill="none" stroke="#4400ff" strokeWidth="1.500" />
      <path d="M1514 1662h2v2h-2z" fill="#3a3" stroke="none" />
    </g>
  );
};

const Model = () => (
  <Drawing role="img" aria-label="Isometric wireframe of a two span girder bridge">
    <g transform="translate(-691 -120)" fill="none" stroke="#757575" strokeWidth="1.200">
      <path d={girder()} />
      <path d={tendons()} />
      <path d={marks()} strokeWidth="1.500" />
      <path d={`M${pt(0, 125, 0)}L${pt(2080, 125, 0)}`} strokeWidth="4" stroke="#808080" />
      <path d={`M${pt(0, 121, 12)}L${pt(1041, 125, -1)}L${pt(2080, 129, 12)}`} strokeWidth="1.500" stroke="#808080" />
      <Pier dx={0} dy={0} />
      <Pier dx={1026} dy={-589} />
      <Pier dx={2051} dy={-1180} />
      <g stroke="#000">
        <path d="M788 1886L810 1897L867 1863L847 1851L886 1829L906 1841L926 1829L965 1851L945 1863L1003 1896L1024 1886V1930H945L965 1919L906 1886L847 1919L867 1930H788Z" strokeWidth="1.500" />
        <path d="M914 1878L878 1858L905 1863L897 1846L936 1869M838 1891L819 1924M800 1914L857 1902M965 1896L985 1908L993 1925M985 1908L1013 1914" strokeWidth="1.500" />
        <path d="M2684.500 119V2042M691 1539.500H3802M2677 1532H2692V1547H2677Z" strokeWidth="1.500" />
      </g>
    </g>
  </Drawing>
);

/* ---------- wizard figure ---------- */

const Support = ({ x }: { x: number }) => (
  <path
    d={`M${x} 188L${x - 9} 205H${x + 9}ZM${x - 18} 205H${x + 19}M${x - 15} 205l-8 10M${x - 8} 205l-8 10M${x - 1} 205l-8 10M${x + 6} 205l-8 10M${x + 13} 205l-8 10M${x + 19} 205l-8 10`}
    stroke="#000"
    strokeWidth="2.400"
  />
);

const BridgeFigure = () => (
  <svg width="100%" viewBox="0 0 906 340" role="img" aria-label="Bridge elevation: segments, piers, spans and cantilevers">
    <g fill="none" strokeWidth="2">
      <path stroke="#0a8a0a" strokeWidth="2.400" d="M229 92H95V74H820V92H682M229 74V92L285 110M315 110L374 92V74M374 92H537V74M537 92L594 110M624 110L682 92V74" />
      <path stroke="#2222ff" d="M156 92H174V187H156ZM286 110H315V187H286ZM594 110H624V187H594ZM736 92H755V187H736Z" />
      {[165, 299, 607, 744].map((x) => <Support key={x} x={x} />)}
      <path stroke="#222" d={"M76 237H839" + [99, 165, 299, 607, 743, 818].map((x) => `M${x} 223V253M${x + 11} 226L${x - 12} 251`).join("")} />
      <path stroke="#000" strokeWidth="2.200" d="M310 47Q284 52 284 62Q284 70 294 83M427 47Q455 54 455 62Q454 70 444 83M304 153Q314 135 321 135C328 135 334 153 340 153Q346 153 359 135" />
    </g>
    <g fontFamily={FORM} fontWeight="700" fontSize="24" fill="#111">
      <text x="317" y="52">Segment</text>
      <text x="360" y="143">Pier</text>
      <text x="106" y="274">Left</text>
      <text x="39" y="303">Cantilever</text>
      <text x="204" y="274">Span</text>
      <text x="422" y="274">Span</text>
      <text x="644" y="274">Span</text>
      <text x="747" y="274">Right</text>
      <text x="748" y="303">Cantilever</text>
    </g>
  </svg>
);

const Wizard = () => (
  <Dialog role="dialog" aria-label="Bridge Wizard">
    <DialogTitle>
      Bridge Wizard
      <button aria-label="Close wizard">
        <svg width="22" height="22" viewBox="0 0 22 22"><path d="M1 1L21 21M21 1L1 21" stroke="#000" strokeWidth="2" /></svg>
      </button>
    </DialogTitle>
    <PageTitle>General (1/5)</PageTitle>
    <Figure><BridgeFigure /></Figure>
    <Group $h={95}>
      <legend>Span</legend>
      <SpanRow>
        <Choice><Check type="checkbox" />Cantilever left</Choice>
        <label htmlFor="spans">Number of spans:</label>
        <NumberInput id="spans" defaultValue="2" />
        <Choice><Check type="checkbox" />Cantilever right</Choice>
      </SpanRow>
    </Group>
    <Group $h={91}>
      <legend>Segment</legend>
      <SegmentRow>
        <label htmlFor="segments">Number of segments:</label>
        <NumberBox>
          <NumberInput id="segments" defaultValue="10" />
          <Caret />
        </NumberBox>
      </SegmentRow>
    </Group>
    <Group $h={88} $wide>
      <legend>Support</legend>
      <SupportRow>
        <Choice><Radio type="radio" name="support" defaultChecked />Piers</Choice>
        <Choice><Radio type="radio" name="support" />Point supports</Choice>
      </SupportRow>
    </Group>
    <Rule />
    <Buttons>
      <Push $w={165} $h={51}>Cancel</Push>
      <Push $w={165} $h={51} disabled>&lt;&lt; Back</Push>
      <Push $w={165} $h={51} $main>Next &gt;&gt;</Push>
    </Buttons>
  </Dialog>
);

/* ---------- page ---------- */

const menus = ["_File", "_Edit", "_View", "_User Interface", "_Settings", "_Tools", "_Draw", "Modif_y", "Material", "Moving Load", "Model", "Build", "Loading", "Process", "_Reports", "Help"];

const MenuText = ({ text }: { text: string }) => {
  const i = text.indexOf("_");
  if (i < 0) return <>{text}</>;
  return <>{text.slice(0, i)}<u>{text[i + 1]}</u>{text.slice(i + 2)}</>;
};

const cells: [string, number][] = [
  ["Space View", 178], ["25.82, -4.76, -21.06", 247], ["SI", 52], ["Cell", 73], ["SNP ON", 100], ["ORT OFF", 101],
  ["GRD OFF 0.10, 0.10", 240], ["08/11/20", 105], ["14:03", 66], ["", 51], ["NUM", 60],
];

const Triangle = ({ d }: { d: string }) => (
  <svg width="20" height="20" viewBox="0 0 20 20" aria-hidden="true"><path d={d} /></svg>
);

export default function App() {
  return (
    <Shell>
      <Global />
      <TitleBar>
        <svg width="34" height="32" viewBox="0 0 34 32" aria-hidden="true">
          <path d="M1 4L12 0H33V25L11 32L1 29Z" fill="#24106e" />
          <path d="M1 4L12 6V32L1 29Z" fill="#150a4c" />
          <path d="M12 6L33 0V25L12 32Z" fill="#341b93" />
          <path d="M13 10L30 6" stroke="#b9aee8" strokeWidth="3" strokeDasharray="3 1" />
        </svg>
        <Title>ABI2009_EX2_CIP_Girder.abi - ABI</Title>
        <WindowButton aria-label="Minimize">
          <svg width="22" height="22"><path d="M1 12H21" stroke="#000" strokeWidth="2" /></svg>
        </WindowButton>
        <WindowButton aria-label="Restore">
          <svg width="22" height="22"><path d="M2 6H16V20H2ZM6 6V2H20V16H16" stroke="#000" strokeWidth="2" fill="none" /></svg>
        </WindowButton>
        <WindowButton aria-label="Close">
          <svg width="22" height="22"><path d="M1 1L21 21M21 1L1 21" stroke="#000" strokeWidth="2" /></svg>
        </WindowButton>
      </TitleBar>
      <MenuBar>
        <MenuGrip />
        {menus.map((m) => (
          <MenuItem key={m}><MenuText text={m} /></MenuItem>
        ))}
      </MenuBar>
      <ToolBar>
        {toolGroups.map((g) => (
          <ToolGroup key={g.items} $w={g.w}>
            <Grip />
            {g.items.split(" ").map((n, i) =>
              n === "|" ? (
                <Divider key={i} />
              ) : (
                <Tool key={i} $on={n[0] === "*"} aria-label={n.replace("*", "")}>
                  <Icon name={n.replace("*", "")} />
                </Tool>
              )
            )}
          </ToolGroup>
        ))}
      </ToolBar>
      <Workspace>
        <SidePane>
          <PaneTitle>Event Manager</PaneTitle>
          <BrowserTitle>Project Browser</BrowserTitle>
          <TreeBox><EventTree /></TreeBox>
          <PaneFoot>
            <OutputAll><Check type="checkbox" />Output All</OutputAll>
            <DayRow>
              <label htmlFor="day">Day</label>
              <DayInput id="day" defaultValue="0" />
            </DayRow>
            <Push $w={174} $h={43}>Add</Push>
          </PaneFoot>
        </SidePane>
        <ViewPane>
          <Canvas>
            <Model />
            <Wizard />
          </Canvas>
          <VBar>
            <ScrollButton aria-label="Scroll up"><Triangle d="M10 5L18 15H2Z" /></ScrollButton>
            <span />
            <ScrollButton aria-label="Vertical position" />
            <span />
            <ScrollButton aria-label="Scroll down"><Triangle d="M10 15L18 5H2Z" /></ScrollButton>
          </VBar>
          <HBar>
            <ScrollButton aria-label="Scroll left"><Triangle d="M5 10L14 1V19Z" /></ScrollButton>
            <span />
            <ScrollButton aria-label="Horizontal position" />
            <span />
            <ScrollButton aria-label="Scroll right"><Triangle d="M15 10L6 1V19Z" /></ScrollButton>
          </HBar>
          <Corner />
        </ViewPane>
      </Workspace>
      <StatusBar>
        <Ready>Ready</Ready>
        {cells.map(([t, w], i) => (
          <Cell key={i} $w={w}>{t}</Cell>
        ))}
      </StatusBar>
      <ProgressRow><Progress role="progressbar" aria-label="Progress" /></ProgressRow>
      <TaskEdge />
    </Shell>
  );
}
